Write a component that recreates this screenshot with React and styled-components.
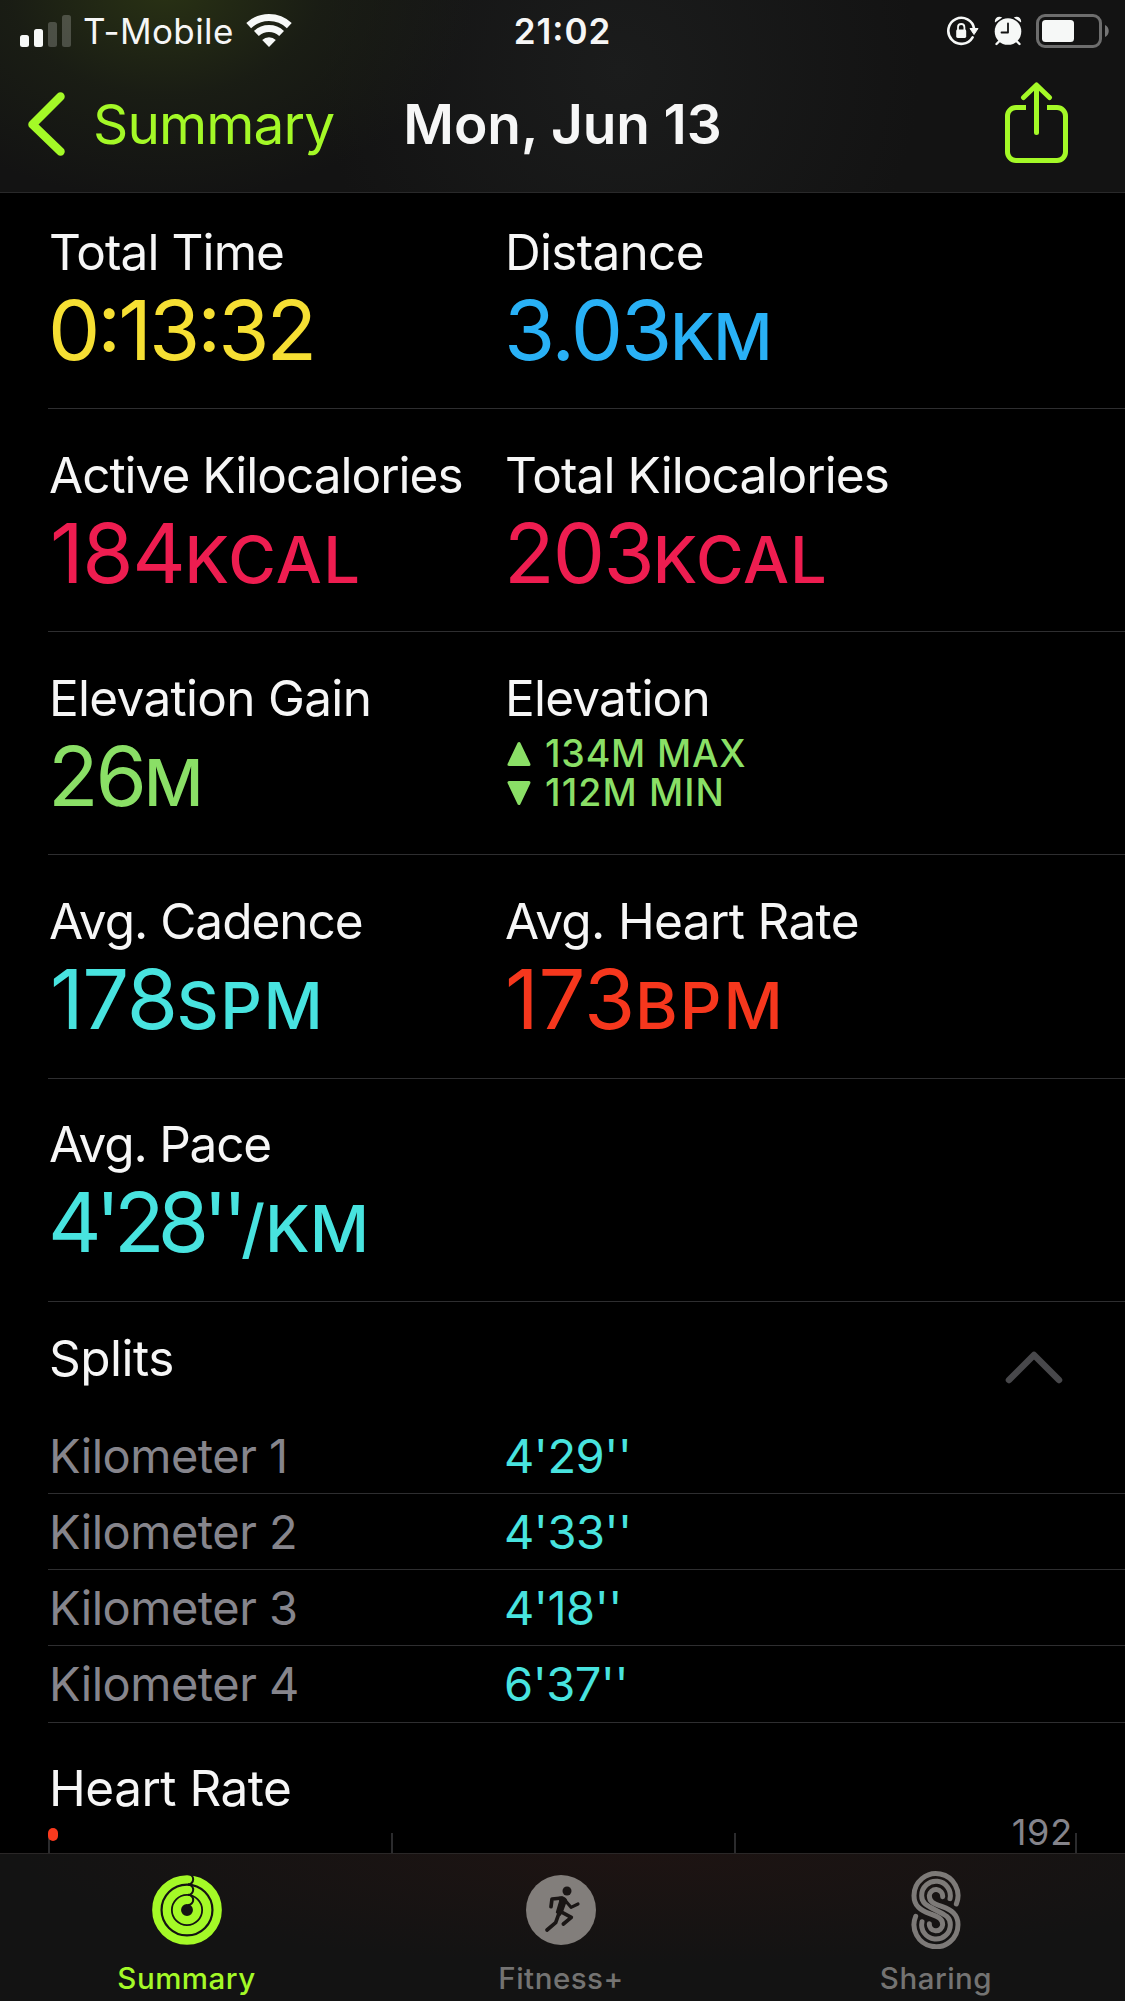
import React from "react";
import styled, { createGlobalStyle } from "styled-components";

const GlobalStyle = createGlobalStyle`
  *, *::before, *::after { box-sizing: border-box; }
  html, body { margin: 0; padding: 0; background: #000; }
  body { font-family: Inter, "Liberation Sans", sans-serif; }
`;

const LIME = "#a4f927";
const CYAN = "#48e3df";
const DIVIDER = "#2e2e30";

const Screen = styled.div`
  display: flex;
  flex-direction: column;
  width: 1125px;
  height: 2001px;
  overflow: hidden;
  background: #000;
  color: #f6f6f6;
  -webkit-font-smoothing: antialiased;
`;

const Header = styled.header`
  flex: none;
  height: 193px;
  border-bottom: 1px solid #29292a;
  background:
    radial-gradient(ellipse 310px 210px at 165px -10px, rgba(42, 51, 20, 0.95), rgba(30, 35, 21, 0.6) 50%, rgba(19, 19, 19, 0) 100%),
    radial-gradient(ellipse 300px 300px at 620px 70px, #1b1c1c, rgba(19, 19, 19, 0) 100%),
    #131313;
`;

const StatusBar = styled.div`
  display: grid;
  grid-template-columns: 1fr auto 1fr;
  align-items: center;
  height: 62px;
  padding: 0 15px 0 20px;
`;

const StatusGroup = styled.div`
  display: flex;
  align-items: center;
  gap: ${(p) => p.$gap || 0}px;
  justify-content: ${(p) => (p.$end ? "flex-end" : "flex-start")};
`;

const Carrier = styled.span`
  margin: 0 12.5px 0 11px;
  font-size: 35px;
  line-height: 62px;
  letter-spacing: 0.4px;
`;

const Clock = styled.span`
  margin-right: 5px;
  font-size: 35px;
  font-weight: 600;
  line-height: 62px;
  letter-spacing: 1px;
  font-feature-settings: "calt" 1, "case" 1;
`;

const NavBar = styled.nav`
  display: grid;
  grid-template-columns: 1fr auto 1fr;
  align-items: center;
  height: 124px;
  padding: 0 26px;
`;

const BackButton = styled.button`
  display: flex;
  align-items: center;
  gap: 27px;
  padding: 0;
  border: 0;
  background: none;
  color: ${LIME};
  font: 400 55px/80px Inter, "Liberation Sans", sans-serif;
  letter-spacing: -0.9px;
`;

const Title = styled.h1`
  margin: 0;
  font-size: 55px;
  font-weight: 600;
  line-height: 80px;
  letter-spacing: -0.1px;
`;

const ShareButton = styled.button`
  justify-self: end;
  display: flex;
  margin: -3px 30px 0 0;
  padding: 0;
  border: 0;
  background: none;
`;

const Content = styled.main`
  flex: none;
  display: flex;
  flex-direction: column;
  height: 1660px;
  padding-left: 48px;
  overflow: hidden;
`;

const MetricRow = styled.section`
  flex: none;
  display: grid;
  grid-template-columns: 456px 1fr;
  height: ${(p) => p.$height}px;
  padding-top: ${(p) => p.$top}px;
  border-bottom: 1px solid ${DIVIDER};
`;

const Metric = styled.div`
  display: flex;
  flex-direction: column;
`;

const Label = styled.div`
  padding-left: 1px;
  font-size: 49.5px;
  line-height: 60px;
  letter-spacing: ${(p) => p.$track ?? -0.8}px;
  white-space: nowrap;
`;

const Value = styled.div`
  margin-top: 6px;
  padding-left: ${(p) => p.$indent || 0}px;
  color: ${(p) => p.$color};
  font-size: 83px;
  line-height: 84px;
  letter-spacing: ${(p) => p.$track ?? -3}px;
  white-space: nowrap;
  font-feature-settings: "calt" 1, "case" 1;
`;

const Prime = styled.span`
  margin: 0 0.8px;
`;

const Unit = styled.span`
  font-size: 65px;
  font-weight: 500;
  letter-spacing: ${(p) => p.$track ?? 0}px;
`;

const ElevationList = styled.div`
  display: flex;
  flex-direction: column;
  margin-top: 6px;
  color: #8adf66;
`;

const ElevationLine = styled.div`
  display: flex;
  align-items: center;
  gap: 14px;
  height: 39px;
  padding-left: 3px;
  font-size: 37.5px;
  font-weight: 500;
  line-height: 39px;
  letter-spacing: ${(p) => p.$track}px;
  white-space: nowrap;
`;

const SplitsHeader = styled.div`
  flex: none;
  display: flex;
  align-items: flex-start;
  justify-content: space-between;
  height: 116px;
  padding: 26px 61px 0 0;
`;

const CollapseButton = styled.button`
  display: flex;
  margin-top: 21px;
  padding: 0;
  border: 0;
  background: none;
`;

const SplitRow = styled.div`
  flex: none;
  display: grid;
  grid-template-columns: 456px 1fr;
  height: ${(p) => p.$height}px;
  border-bottom: 1px solid ${DIVIDER};
  font-size: 47px;
  line-height: 76px;
  letter-spacing: -0.5px;
`;

const SplitName = styled.span`
  padding-left: 1px;
  color: #86858c;
`;

const SplitTime = styled.span`
  color: ${CYAN};
`;

const ChartSection = styled.section`
  display: flex;
  flex-direction: column;
  padding-top: 35px;
`;

const Chart = styled.div`
  position: relative;
  display: grid;
  grid-template-columns: 343px 343px 341px 2px;
  width: 1029px;
  height: 36px;
  padding-top: 15px;
`;

const GridLine = styled.i`
  width: 2px;
  background: #2b2b2d;
`;

const Peak = styled.span`
  position: absolute;
  right: 4px;
  top: -4px;
  color: #85848b;
  font-size: 36px;
  line-height: 36px;
  letter-spacing: 0.8px;
`;

const Beat = styled.i`
  position: absolute;
  left: ${(p) => p.$x}px;
  top: ${(p) => p.$y}px;
  width: 10px;
  height: 13px;
  border-radius: 5px;
  background: #fa3a1e;
`;

const TabBar = styled.footer`
  flex: none;
  display: grid;
  grid-template-columns: 373px 376px 374px;
  height: 148px;
  border-top: 1px solid #2a2727;
  background:
    radial-gradient(ellipse 620px 110px at 640px 0, rgba(34, 20, 18, 0.7), rgba(19, 19, 19, 0) 100%),
    #131313;
`;

const Tab = styled.button`
  display: flex;
  flex-direction: column;
  align-items: center;
  padding: 16px 0 0;
  border: 0;
  background: none;
  color: ${(p) => (p.$active ? LIME : "#747372")};
`;

const TabIcon = styled.span`
  display: flex;
  align-items: center;
  justify-content: center;
  height: 80px;
`;

const TabLabel = styled.span`
  margin-top: 8px;
  font: 500 29.5px/40px Inter, "Liberation Sans", sans-serif;
  letter-spacing: 0.5px;
`;

const SignalIcon = () => (
  <svg width="52" height="34" viewBox="0 0 52 34" fill="#f6f8f7">
    <rect x="0" y="21" width="9" height="12" rx="2.5" />
    <rect x="14" y="15" width="9" height="18" rx="2.5" />
    <rect x="28" y="8" width="9" height="25" rx="2.5" opacity=".22" />
    <rect x="42" y="1" width="9" height="32" rx="2.5" opacity=".22" />
  </svg>
);

const WifiIcon = () => (
  <svg width="46" height="34" viewBox="-23 -33 46 34" fill="none" stroke="#f6f8f7">
    <path d="M-20.3 -21.4A29.5 29.5 0 0 1 20.3 -21.4" strokeWidth="7" />
    <path d="M-12.6 -13.5A18.5 18.5 0 0 1 12.6 -13.5" strokeWidth="7" />
    <path d="M0 0L-6.8 -7A9.8 9.8 0 0 1 6.8 -7Z" fill="#f6f8f7" stroke="none" />
  </svg>
);

const RotationLockIcon = () => (
  <svg width="32" height="30" viewBox="0 0 32 30" fill="none" stroke="#f6f8f7">
    <path d="M27.2 13A13 13 0 1 0 25.6 21.3" strokeWidth="2.6" strokeLinecap="round" />
    <path d="M23 12.5h8L27 18.5z" fill="#f6f8f7" strokeWidth="1" strokeLinejoin="round" />
    <rect x="9.2" y="13.5" width="10" height="8.5" rx="1.4" fill="#f6f8f7" stroke="none" />
    <path d="M11 14v-2.8a3.2 3.2 0 0 1 6.4 0V14" strokeWidth="1.8" />
  </svg>
);

const AlarmIcon = () => (
  <svg width="28" height="30" viewBox="0 0 28 30" fill="#f6f8f7">
    <circle cx="14" cy="15.5" r="13.3" />
    <path d="M1 6.5C0 2 4.5 -.8 8.2 1.6zM27 6.5C28 2 23.5 -.8 19.8 1.6z" />
    <path d="M5 25.5L2.5 28M23 25.5L25.5 28" stroke="#f6f8f7" strokeWidth="2.4" strokeLinecap="round" />
    <path d="M14 7.5V16.5H7.5" fill="none" stroke="#131313" strokeWidth="1.8" strokeLinecap="round" strokeLinejoin="round" />
  </svg>
);

const BatteryIcon = () => (
  <svg width="74" height="34" viewBox="0 0 74 34">
    <rect x="1.5" y="1.5" width="63" height="31" rx="7.5" fill="none" stroke="#6d6d6d" strokeWidth="3" />
    <rect x="6" y="6" width="32" height="22" rx="3.5" fill="#f6f8f7" />
    <path d="M69 11c5 2 5 10 0 12z" fill="#757575" />
  </svg>
);

const BackIcon = () => (
  <svg width="40" height="64" viewBox="0 0 40 64" fill="none" stroke={LIME} strokeWidth="8.5" strokeLinecap="round" strokeLinejoin="round">
    <path d="M34.5 4.5L6.5 32.5L34.5 59.5" />
  </svg>
);

const ShareIcon = () => (
  <svg width="65" height="82" viewBox="0 0 65 82" fill="none" stroke={LIME} strokeWidth="5">
    <path d="M22 25.5H12A8.5 8.5 0 0 0 3.5 34V70A8.5 8.5 0 0 0 12 78.5H53A8.5 8.5 0 0 0 61.5 70V34A8.5 8.5 0 0 0 53 25.5H43" />
    <path d="M32.5 3.5V50.5M19.5 15.5L32.5 3L45.5 15.5" strokeLinecap="round" strokeLinejoin="round" />
  </svg>
);

const Triangle = ({ down }) => (
  <svg width="24" height="26" viewBox="0 0 24 26" fill="currentColor" stroke="currentColor" strokeWidth="3" strokeLinejoin="round">
    {down ? <path d="M2 2.5H22L12 23.5Z" /> : <path d="M2 23.5H22L12 2.5Z" />}
  </svg>
);

const CollapseIcon = () => (
  <svg width="60" height="36" viewBox="0 0 60 36" fill="none" stroke="#48484b" strokeWidth="6.5" strokeLinecap="round" strokeLinejoin="round">
    <path d="M5 31L30 6L55 31" />
  </svg>
);

const RINGS = [30.7, 20.2, 10.1];

const RingsIcon = () => (
  <svg width="70" height="70" viewBox="-35 -35 70 70" fill="none">
    {RINGS.map((r) => (
      <g key={r}>
        <circle r={r} stroke={LIME} strokeWidth="8.3" />
        <path d={`M1 ${-r - 5.2}A5.2 5.2 0 0 1 1 ${-r + 5.2}`} stroke="#131313" strokeWidth="2" />
      </g>
    ))}
  </svg>
);

const RunnerIcon = () => (
  <svg width="70" height="70" viewBox="0 0 210 210" fill="none" stroke="#1a1615" strokeWidth="11" strokeLinecap="round" strokeLinejoin="round">
    <circle cx="105" cy="105" r="105" fill="#827e7b" stroke="none" />
    <circle cx="123" cy="48" r="13.5" fill="#1a1615" stroke="none" />
    <path d="M75 95L78 72L108 69" />
    <path d="M100 68Q116 64 121 76L108 112L102 120L92 112L102 78Z" fill="#1a1615" strokeWidth="5" />
    <path d="M117 76L135 97L156 87" strokeWidth="9.5" />
    <path d="M104 110L136 127L112 147" />
    <path d="M100 112L89 143L63 165" />
  </svg>
);

const SharingIcon = () => (
  <svg width="50" height="78" viewBox="-1 0 150 234" fill="none" stroke="#7d7a78" strokeWidth="15" strokeLinecap="round">
    <path d="M135 99A66 66 0 1 0 8 74C8 105 28 118 55 128C82 138 94 142 94 161A20 20 0 0 1 54 158" />
    <path d="M116 83A43 43 0 1 0 31 74C31 96 45 103 74 117.5S117 139 117 161A43 43 0 1 1 32 152" />
    <path d="M94 77A20 20 0 1 0 54 74C54 93 66 97 93 107C120 117 140 130 140 161A66 66 0 1 1 13 136" />
  </svg>
);

const metricRows = [
  {
    height: 216,
    top: 29,
    cells: [
      { label: "Total Time", labelTrack: -0.9, value: "0:13:32", color: "#f6df33" },
      { label: "Distance", labelTrack: -0.7, value: "3.03", track: -2.2, unit: "KM", unitTrack: -1.5, color: "#29b1f6" },
    ],
  },
  {
    height: 223,
    top: 36,
    cells: [
      { label: "Active Kilocalories", labelTrack: -1, value: "184", track: -1.4, unit: "KCAL", unitTrack: 1.3, indent: 2, color: "#ee1d50" },
      { label: "Total Kilocalories", labelTrack: -0.9, value: "203", track: -1.8, unit: "KCAL", unitTrack: 0.8, color: "#ee1d50" },
    ],
  },
  {
    height: 223,
    top: 36,
    cells: [
      { label: "Elevation Gain", labelTrack: -0.7, value: "26", unit: "M", color: "#8adf66" },
      {
        label: "Elevation",
        range: [
          { text: "134M MAX", track: 0.8 },
          { text: "112M MIN", track: 1.1, down: true },
        ],
      },
    ],
  },
  {
    height: 224,
    top: 36,
    cells: [
      { label: "Avg. Cadence", labelTrack: -1, value: "178", track: -1.4, unit: "SPM", unitTrack: 1.6, indent: 2, color: CYAN },
      { label: "Avg. Heart Rate", labelTrack: -0.65, value: "173", track: -0.2, unit: "BPM", unitTrack: 2, indent: 1, color: "#f6371d" },
    ],
  },
  {
    height: 223,
    top: 35,
    cells: [{ label: "Avg. Pace", labelTrack: -1.2, value: "4'28''", track: -7, unit: "/KM", color: CYAN }],
  },
];

const splits = ["4'29''", "4'33''", "4'18''", "6'37''"];

const tabs = [
  { name: "Summary", Icon: RingsIcon, active: true },
  { name: "Fitness+", Icon: RunnerIcon },
  { name: "Sharing", Icon: SharingIcon },
];

const withPrimes = (text) =>
  text.includes("'") ? [...text].map((c, i) => (c === "'" ? <Prime key={i}>{c}</Prime> : c)) : text;

const MetricCell = ({ label, value, unit, color, range, track, labelTrack, unitTrack, indent }) => (
  <Metric>
    <Label $track={labelTrack}>{label}</Label>
    {range ? (
      <ElevationList>
        {range.map((line) => (
          <ElevationLine key={line.text} $track={line.track}>
            <Triangle down={line.down} />
            {line.text}
          </ElevationLine>
        ))}
      </ElevationList>
    ) : (
      <Value $color={color} $track={track} $indent={indent}>
        {withPrimes(value)}
        {unit && <Unit $track={unitTrack}>{unit}</Unit>}
      </Value>
    )}
  </Metric>
);

export default function App() {
  return (
    <Screen>
      <GlobalStyle />
      <Header>
        <StatusBar>
          <StatusGroup>
            <SignalIcon />
            <Carrier>T-Mobile</Carrier>
            <WifiIcon />
          </StatusGroup>
          <Clock>21:02</Clock>
          <StatusGroup $end $gap={14.5}>
            <RotationLockIcon />
            <AlarmIcon />
            <BatteryIcon />
          </StatusGroup>
        </StatusBar>
        <NavBar>
          <BackButton>
            <BackIcon />
            Summary
          </BackButton>
          <Title>Mon, Jun 13</Title>
          <ShareButton aria-label="Share">
            <ShareIcon />
          </ShareButton>
        </NavBar>
      </Header>
      <Content>
        {metricRows.map(({ height, top, cells }) => (
          <MetricRow key={cells[0].label} $height={height} $top={top}>
            {cells.map((cell) => (
              <MetricCell key={cell.label} {...cell} />
            ))}
          </MetricRow>
        ))}
        <SplitsHeader>
          <Label $track={-0.5}>Splits</Label>
          <CollapseButton aria-label="Collapse splits">
            <CollapseIcon />
          </CollapseButton>
        </SplitsHeader>
        {splits.map((time, i) => (
          <SplitRow key={time} $height={i === 3 ? 77 : 76}>
            <SplitName>Kilometer {i + 1}</SplitName>
            <SplitTime>{time}</SplitTime>
          </SplitRow>
        ))}
        <ChartSection>
          <Label $track={-0.5}>Heart Rate</Label>
          <Chart>
            <GridLine />
            <GridLine />
            <GridLine />
            <GridLine />
            <Beat $x={0} $y={10} />
            <Beat $x={944} $y={35} />
            <Peak>192</Peak>
          </Chart>
        </ChartSection>
      </Content>
      <TabBar>
        {tabs.map(({ name, Icon, active }) => (
          <Tab key={name} $active={active}>
            <TabIcon>
              <Icon />
            </TabIcon>
            <TabLabel>{name}</TabLabel>
          </Tab>
        ))}
      </TabBar>
    </Screen>
  );
}
